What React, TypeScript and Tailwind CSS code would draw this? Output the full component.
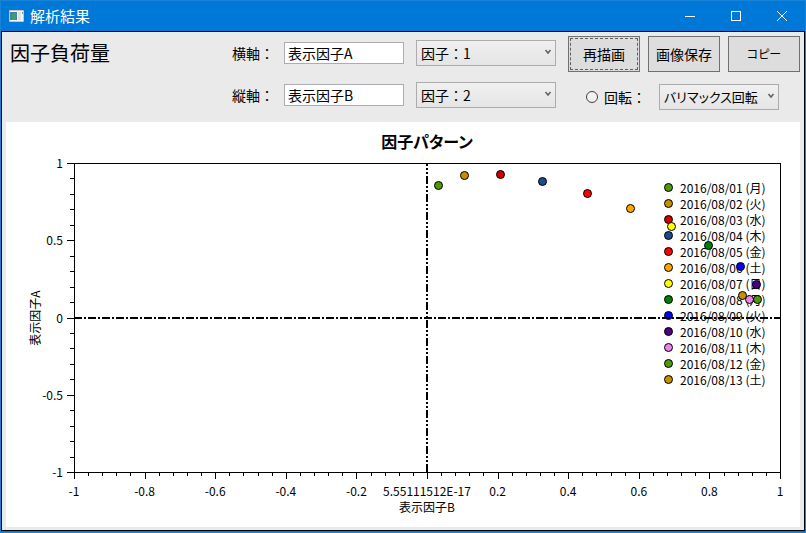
import { useState } from 'react';

const points = [
  { label: '2016/08/01 (月)', color: '#4e9a06', x: 433, y: 64 },
  { label: '2016/08/02 (火)', color: '#c88d00', x: 459, y: 54 },
  { label: '2016/08/03 (水)', color: '#cc0000', x: 495, y: 53 },
  { label: '2016/08/04 (木)', color: '#204a87', x: 537, y: 60 },
  { label: '2016/08/05 (金)', color: '#ff0000', x: 582, y: 72 },
  { label: '2016/08/06 (土)', color: '#ffa500', x: 625, y: 87 },
  { label: '2016/08/07 (日)', color: '#ffff00', x: 666, y: 105 },
  { label: '2016/08/08 (月)', color: '#008000', x: 703, y: 124 },
  { label: '2016/08/09 (火)', color: '#0000ff', x: 735, y: 145 },
  { label: '2016/08/10 (水)', color: '#4b0082', x: 751, y: 163 },
  { label: '2016/08/11 (木)', color: '#ee82ee', x: 744, y: 178 },
  { label: '2016/08/12 (金)', color: '#4e9a06', x: 752, y: 178 },
  { label: '2016/08/13 (土)', color: '#c88d00', x: 737, y: 174 },
];

const xLabels = ['-1', '-0.8', '-0.6', '-0.4', '-0.2', '5.55111512E-17', '0.2', '0.4', '0.6', '0.8', '1'];
const yLabels = ['1', '0.5', '0', '-0.5', '-1'];

// plot area inside the 794 x 405 chart
const plot = { left: 68, top: 41, width: 706, height: 309 };

type SelectProps = {
  label: string;
  value: string;
  options: string[];
  onChange: (value: string) => void;
  className: string;
};

function Select({ label, value, options, onChange, className }: SelectProps) {
  return (
    <div className={`relative ${className}`}>
      <select
        aria-label={label}
        value={value}
        onChange={(e) => onChange(e.target.value)}
        className="h-full w-full appearance-none border border-[#acacac] bg-gradient-to-b from-[#f0f0f0] to-[#e5e5e5] pl-1 pr-4"
      >
        {options.map((option) => (
          <option key={option}>{option}</option>
        ))}
      </select>
      <svg className="pointer-events-none absolute right-1 top-2 h-2 w-2" viewBox="0 0 8 8">
        <path d="M1.5 2l2.5 3 2.5-3" fill="none" stroke="#606060" strokeWidth="1.5" />
      </svg>
    </div>
  );
}

function Marker({ x, y, color }: { x: number; y: number; color: string }) {
  return <circle cx={x - 0.5} cy={y - 0.5} r="4" fill={color} stroke="#000" />;
}

function Chart({ xTitle, yTitle }: { xTitle: string; yTitle: string }) {
  const { left, top, width, height } = plot;
  const right = left + width;
  const bottom = top + height;

  return (
    <svg viewBox="0 0 794 405" className="block h-auto w-full bg-white text-xs">
      <text x="421" y="26" textAnchor="middle" className="text-base font-semibold [font-feature-settings:'palt']">
        因子パターン
      </text>

      {/* Legend */}
      {points.map((p, i) => (
        <g key={p.label}>
          <Marker x={663} y={66 + i * 16} color={p.color} />
          <text x="674" y={71 + i * 16}>{p.label}</text>
        </g>
      ))}

      {/* Axes */}
      <g stroke="#000" shapeRendering="crispEdges" fill="none">
        <rect x={left + 0.5} y={top + 0.5} width={width} height={height} />
        {Array.from({ length: 51 }, (_, i) => {
          const x = Math.round(left + (width * i) / 50) + 0.5;
          return <line key={i} x1={x} x2={x} y1={bottom} y2={bottom + (i % 5 === 0 ? 7 : 4)} />;
        })}
        {Array.from({ length: 21 }, (_, i) => {
          const y = Math.round(top + (height * i) / 20) + 0.5;
          return <line key={i} x1={left - (i % 5 === 0 ? 7 : 4)} x2={left} y1={y} y2={y} />;
        })}
        <line x1={left} x2={right} y1="196" y2="196" strokeWidth="2" strokeDasharray="8 2 2 2" />
        <line x1="421" x2="421" y1={bottom} y2={top} strokeWidth="2" strokeDasharray="8 2 2 2 2 2" />
      </g>

      {xLabels.map((label, i) => (
        <text key={label} x={left + (width * i) / 10} y="374" textAnchor="middle">{label}</text>
      ))}
      {yLabels.map((label, i) => (
        <text key={label} x="57" y={top + 5 + (height * i) / 4} textAnchor="end">{label}</text>
      ))}
      <text x="421" y="390" textAnchor="middle">{xTitle}</text>
      <text x="34" y="196" textAnchor="middle" transform="rotate(-90 34 196)">{yTitle}</text>

      {/* Data points */}
      {points.map((p) => (
        <Marker key={p.label} x={p.x} y={p.y} color={p.color} />
      ))}
    </svg>
  );
}

export default function App() {
  const [titleA, setTitleA] = useState('表示因子A');
  const [titleB, setTitleB] = useState('表示因子B');
  const [factorA, setFactorA] = useState('因子：1');
  const [factorB, setFactorB] = useState('因子：2');
  const [rotation, setRotation] = useState('バリマックス回転');

  const factors = ['因子：1', '因子：2'];
  const buttonClass = "h-9 w-[72px] border border-[#707070] bg-[#dddddd] [font-feature-settings:'palt']";
  const inputClass = 'h-[22px] w-[120px] border border-[#abadb3] bg-white px-[3px]';

  return (
    <div className="min-h-screen border border-[#1883d7] bg-[#0078d7] font-['Noto_Sans_CJK_JP',sans-serif] text-sm text-black">
      {/* Title bar */}
      <header className="flex h-[30px] items-center text-white">
        <svg className="ml-2 h-3 w-4" viewBox="0 0 16 12">
          <rect width="15" height="12" rx="1" fill="#c4c8cc" />
          <rect x="1" y="1" width="13" height="10" fill="#f4f4f4" />
          <rect x="1" y="2" width="7" height="8" fill="#4d7f96" />
          <rect x="3" y="3" width="4" height="7" fill="#3c9c74" />
          <rect x="9" y="2" width="3" height="8" fill="#dce4e2" />
          <rect x="13" y="2" width="1" height="2" fill="#909090" />
        </svg>
        <h1 className="ml-[5px] flex-1 text-[15px]">解析結果</h1>
        <button type="button" aria-label="最小化" className="flex h-full w-[46px] items-center justify-center">
          <svg className="h-3 w-3" viewBox="0 0 12 12" stroke="#fff">
            <path d="M1 6.5h10" />
          </svg>
        </button>
        <button type="button" aria-label="最大化" className="flex h-full w-[46px] items-center justify-center">
          <svg className="h-3 w-3" viewBox="0 0 12 12" stroke="#fff" fill="none">
            <rect x="1.5" y="1.5" width="9" height="9" />
          </svg>
        </button>
        <button type="button" aria-label="閉じる" className="flex h-full w-[46px] items-center justify-center">
          <svg className="h-3 w-3" viewBox="0 0 12 12" stroke="#fff">
            <path d="M1 1l10 10M11 1L1 11" />
          </svg>
        </button>
      </header>

      <main className="border border-black bg-[#eaeaea] px-1 pb-[3px]">
        <div className="flex h-[90px] justify-between">
          <h2 className="pl-1 pt-[7px] text-xl">因子負荷量</h2>

          <div className="flex gap-3">
            <div className="flex flex-col gap-4 pt-2">
              <div className="flex h-[26px] items-center">
                <label htmlFor="title-a" className="w-[52px]">横軸：</label>
                <input id="title-a" value={titleA} onChange={(e) => setTitleA(e.target.value)} className={inputClass} />
                <Select label="横軸の因子" value={factorA} options={factors} onChange={setFactorA} className="ml-3 h-full w-[140px]" />
              </div>
              <div className="flex h-[26px] items-center">
                <label htmlFor="title-b" className="w-[52px]">縦軸：</label>
                <input id="title-b" value={titleB} onChange={(e) => setTitleB(e.target.value)} className={inputClass} />
                <Select label="縦軸の因子" value={factorB} options={factors} onChange={setFactorB} className="ml-3 h-full w-[140px]" />
              </div>
            </div>

            <div className="flex flex-col gap-3 pt-1">
              <div className="flex gap-2">
                <button type="button" className={`${buttonClass} p-px`}>
                  <span className="flex h-full items-center justify-center border border-dashed border-[#606060]">再描画</span>
                </button>
                <button type="button" className={buttonClass}>画像保存</button>
                <button type="button" className={`${buttonClass} text-xs`}>コピー</button>
              </div>
              <div className="flex h-[26px] items-center pl-[18px]">
                <label className="flex w-[73px] items-center gap-1.5">
                  <input
                    type="radio"
                    name="rotation"
                    className="h-3 w-3 appearance-none rounded-full border border-[#404040] bg-[#f2f2f2] checked:bg-[#404040]"
                  />
                  回転：
                </label>
                <Select
                  label="回転方法"
                  value={rotation}
                  options={['バリマックス回転', 'プロマックス回転']}
                  onChange={setRotation}
                  className="h-full w-[120px] text-[13px] [font-feature-settings:'palt']"
                />
              </div>
            </div>
          </div>
        </div>

        {/* the first field names the vertical axis, the second the horizontal one */}
        <Chart xTitle={titleB} yTitle={titleA} />
      </main>
    </div>
  );
}
